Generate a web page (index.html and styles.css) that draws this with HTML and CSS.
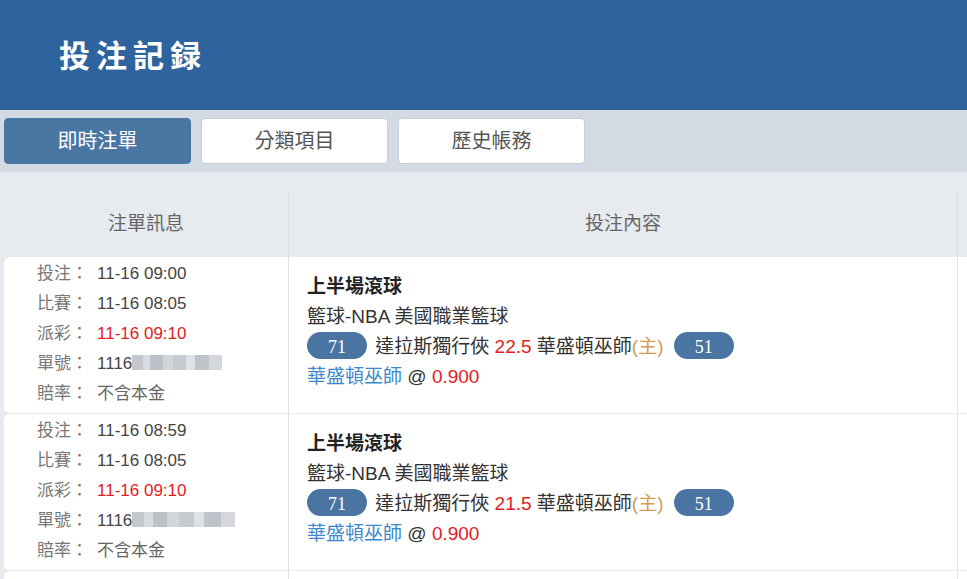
FILE: index.html
```html
<!DOCTYPE html>
<html>
<head>
    <meta charset="utf-8">
    <title>投注記録</title>
    <link rel="stylesheet" href="styles.css">
</head>
<body>
    <div class="page">
        <header class="page-head">
            <h1>投注記録</h1>
        </header>

        <nav class="tabs">
            <button class="tab active">即時注單</button>
            <button class="tab">分類項目</button>
            <button class="tab">歷史帳務</button>
        </nav>

        <section class="bets">
            <div class="bets-head">
                <div class="col-info">注單訊息</div>
                <div class="col-content">投注內容</div>
                <div class="col-edge"></div>
            </div>

            <div class="bet-row">
                <div class="bet-info">
                    <div class="info-line"><span class="label">投注：</span><span class="value">11-16 09:00</span></div>
                    <div class="info-line"><span class="label">比賽：</span><span class="value">11-16 08:05</span></div>
                    <div class="info-line"><span class="label">派彩：</span><span class="value red">11-16 09:10</span></div>
                    <div class="info-line"><span class="label">單號：</span><span class="value">1116<span class="masked"></span></span></div>
                    <div class="info-line"><span class="label">賠率：</span><span class="value plain">不含本金</span></div>
                </div>
                <div class="bet-content">
                    <div class="bet-type">上半場滾球</div>
                    <div>籃球-NBA 美國職業籃球</div>
                    <div class="match"><span class="score">71</span> 達拉斯獨行俠 <span class="red">22.5</span> 華盛頓巫師<span class="home">(主)</span> <span class="score">51</span></div>
                    <div><span class="pick">華盛頓巫師</span> @ <span class="red">0.900</span></div>
                </div>
                <div class="col-edge"></div>
            </div>

            <div class="bet-row">
                <div class="bet-info">
                    <div class="info-line"><span class="label">投注：</span><span class="value">11-16 08:59</span></div>
                    <div class="info-line"><span class="label">比賽：</span><span class="value">11-16 08:05</span></div>
                    <div class="info-line"><span class="label">派彩：</span><span class="value red">11-16 09:10</span></div>
                    <div class="info-line"><span class="label">單號：</span><span class="value">1116<span class="masked wide"></span></span></div>
                    <div class="info-line"><span class="label">賠率：</span><span class="value plain">不含本金</span></div>
                </div>
                <div class="bet-content">
                    <div class="bet-type">上半場滾球</div>
                    <div>籃球-NBA 美國職業籃球</div>
                    <div class="match"><span class="score">71</span> 達拉斯獨行俠 <span class="red">21.5</span> 華盛頓巫師<span class="home">(主)</span> <span class="score">51</span></div>
                    <div><span class="pick">華盛頓巫師</span> @ <span class="red">0.900</span></div>
                </div>
                <div class="col-edge"></div>
            </div>

            <div class="bet-row empty">
                <div class="bet-info"></div>
                <div class="bet-content"></div>
                <div class="col-edge"></div>
            </div>
        </section>
    </div>
</body>
</html>
```

FILE: styles.css
```css
body {
    margin: 0;
    font-family: "Liberation Sans", "Noto Sans CJK TC", sans-serif;
    color: #333;
}

.page {
    height: 100vh;
    overflow: hidden;
    background: #e7eaef;
}

.page-head {
    height: 110px;
    background: #2e649e;
    display: flex;
    align-items: center;
    padding-left: 59px;
}

.page-head h1 {
    margin: 0 0 4px 0;
    color: #fff;
    font-family: "Liberation Serif", "Noto Sans CJK TC", serif;
    font-size: 31px;
    font-weight: 700;
    letter-spacing: 6px;
}

.tabs {
    display: flex;
    gap: 10px;
    height: 62px;
    box-sizing: border-box;
    padding: 8px 4px;
    background: #d3dae3;
}

.tab {
    width: 187px;
    height: 46px;
    padding: 0 0 3px 0;
    border: 1px solid #c9ced5;
    border-radius: 4px;
    background: #fff;
    color: #555;
    font-family: inherit;
    font-size: 20px;
}

.tab.active {
    background: #4a76a4;
    border-color: #4a76a4;
    color: #fff;
}

.bets {
    padding: 18px 0 0 4px;
}

.bets-head,
.bet-row {
    display: grid;
    grid-template-columns: 284px 1fr 10px;
}

.bets-head {
    height: 67px;
    color: #666;
    font-size: 19px;
}

.bets-head > div {
    display: flex;
    align-items: center;
    justify-content: center;
    padding-bottom: 4px;
}

.col-content,
.col-edge,
.bet-content {
    border-left: 1px solid #dfe1e4;
}

.bet-row {
    background: #fff;
    border-bottom: 1px solid #e8eaed;
    border-radius: 6px 0 0 6px;
}

.bet-row.empty {
    height: 60px;
}

.bet-info {
    padding: 2px 0 4px 33px;
    font-size: 17px;
    line-height: 30px;
}

.label {
    display: inline-block;
    width: 60px;
    color: #777;
}

.value {
    color: #444;
}

.value.plain {
    color: #666;
}

.masked {
    display: inline-block;
    width: 90px;
    height: 15px;
    vertical-align: -1px;
    background:
        linear-gradient(90deg, #c4c8cd 0 12%, #d8dbdf 12% 20%, #bcc1c7 20% 34%, #d2d5d9 34% 46%, #c6cbd0 46% 60%, #dfe2e5 60% 70%, #bfc4ca 70% 86%, #d4d7db 86% 100%);
}

.masked.wide {
    width: 103px;
}

.bet-content {
    padding: 15px 0 0 18px;
    font-size: 19px;
    line-height: 30px;
    color: #333;
}

.bet-type {
    font-weight: 700;
    color: #222;
}

.score {
    display: inline-block;
    width: 60px;
    height: 27px;
    border-radius: 14px;
    background: #4a75a2;
    color: #fff;
    text-align: center;
    font-family: "Liberation Serif", serif;
    font-size: 18px;
    line-height: 31px;
    vertical-align: 0;
    margin: 0 3px 0 0;
}

.score:last-child {
    margin: 0 0 0 5px;
}

.red {
    color: #e31b23;
}

.home {
    color: #d29c52;
}

.pick {
    color: #3c88cc;
}
```
